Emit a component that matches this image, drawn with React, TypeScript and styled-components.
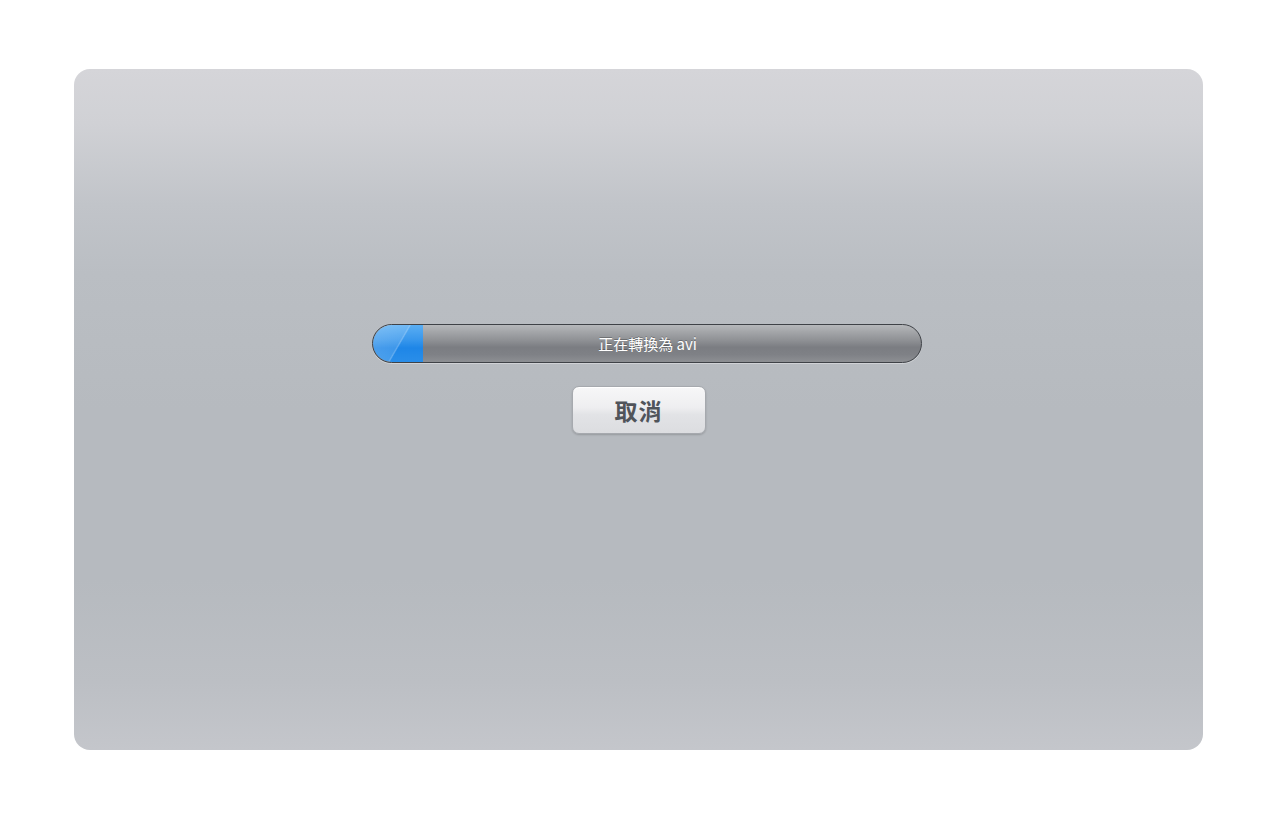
import React from "react";
import styled, { createGlobalStyle } from "styled-components";

const Global = createGlobalStyle`
  html, body { margin: 0; padding: 0; background: #ffffff; }
  body { font-family: "Noto Sans CJK TC", "Noto Sans", sans-serif; }
`;

const Page = styled.div`
  width: 1280px;
  height: 822px;
  box-sizing: border-box;
  padding: 69px 77px 72px 74px;
  display: flex;
`;

const Panel = styled.div`
  flex: 1;
  border-radius: 16px;
  background: linear-gradient(
    to bottom,
    #d5d5d9 0%,
    #d0d1d5 8%,
    #c1c4c9 20%,
    #babec3 30%,
    #b6babf 50%,
    #b6babf 75%,
    #bcbfc4 90%,
    #c4c6cb 100%
  );
  box-sizing: border-box;
  padding-top: 255px;
  display: flex;
  flex-direction: column;
  align-items: center;
  gap: 23px;
`;

const BarRow = styled.div`
  padding-left: 16px;
`;

const Track = styled.div`
  position: relative;
  width: 550px;
  height: 39px;
  box-sizing: border-box;
  border: 1px solid #3f4247;
  border-radius: 20px;
  overflow: hidden;
  background: linear-gradient(
    to bottom,
    #b6b8bb 0%,
    #a4a6a9 18%,
    #8e9094 42%,
    #7b7d82 60%,
    #7f8186 80%,
    #8d8f93 100%
  );
  box-shadow: 0 1px 0 rgba(255, 255, 255, 0.35);
  display: flex;
  align-items: center;
  justify-content: center;
`;

const Fill = styled.div`
  position: absolute;
  left: 0;
  top: 0;
  bottom: 0;
  background:
    linear-gradient(
      120deg,
      rgba(255, 255, 255, 0.22) 0%,
      rgba(255, 255, 255, 0.14) 50%,
      rgba(255, 255, 255, 0.3) 52%,
      rgba(255, 255, 255, 0) 54%,
      rgba(255, 255, 255, 0) 100%
    ),
    linear-gradient(to bottom, #5aaef3 0%, #3897ec 40%, #1e86e7 62%, #2a8ee9 100%);
  border-radius: 19px 0 0 19px;
`;

const Label = styled.span`
  position: relative;
  left: 1px;
  color: #ffffff;
  font-size: 15px;
  line-height: 1;
  font-family: "Noto Sans CJK TC", "Noto Sans", sans-serif;
  text-shadow: 0 -1px 0 rgba(0, 0, 0, 0.25);
`;

const CancelButton = styled.button`
  width: 134px;
  height: 48px;
  box-sizing: border-box;
  border: 1px solid #a6a9ae;
  border-radius: 7px;
  background: linear-gradient(to bottom, #f7f7f8 0%, #eeeef0 45%, #e2e3e6 60%, #dcdde0 100%);
  box-shadow: 0 1px 2px rgba(0, 0, 0, 0.18), inset 0 1px 0 #ffffff;
  color: #50545a;
  font-family: "Noto Sans CJK TC", "Noto Sans", sans-serif;
  font-size: 23px;
  font-weight: 700;
  letter-spacing: 1px;
  display: flex;
  align-items: center;
  justify-content: center;
  padding: 0;
  cursor: pointer;
`;

export default function App() {
  const progress = 50;
  return (
    <>
      <Global />
      <Page>
        <Panel>
          <BarRow>
            <Track>
              <Fill style={{ width: `${progress}px` }} />
              <Label>正在轉換為 avi</Label>
            </Track>
          </BarRow>
          <CancelButton>取消</CancelButton>
        </Panel>
      </Page>
    </>
  );
}
